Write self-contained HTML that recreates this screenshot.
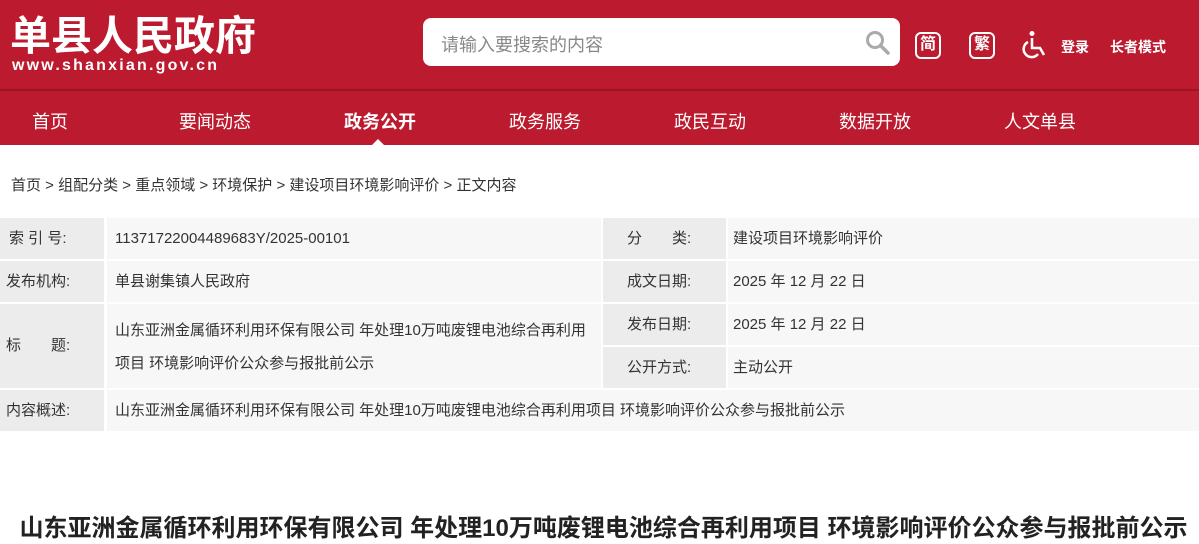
<!DOCTYPE html>
<html><head><meta charset="utf-8"><style>
*{margin:0;padding:0;box-sizing:border-box}
body{width:1199px;height:544px;overflow:hidden;background:#fff;font-family:"Liberation Sans","Noto Sans CJK SC",sans-serif;position:relative;color:#333}
.hd{position:absolute;left:0;top:0;width:1199px;height:145px;background:#bc1a2e}
.line{position:absolute;left:0;top:89px;width:1199px;height:2px;background:#9e1426}
.logo{position:absolute;left:10px;top:12px;color:#fff;font-size:41px;font-weight:bold;line-height:48px}
.url{position:absolute;left:12px;top:57px;color:#fff;font-size:16px;font-weight:bold;letter-spacing:2.2px}
.search{position:absolute;left:423px;top:18px;width:477px;height:48px;background:#fff;border-radius:8px}
.search span{position:absolute;left:18px;top:13px;font-size:18px;color:#888}
.ico{position:absolute;top:32px;width:26px;height:27px;border:2px solid #fff;border-radius:6px;color:#fff;font-size:16px;text-align:center;line-height:22px;font-weight:bold}
.tw{position:absolute;top:37px;color:#fff;font-size:14px;font-weight:bold}
.nav{position:absolute;top:108px;color:#fff;font-size:18px}
.bc{position:absolute;left:11px;top:174px;font-size:15px;color:#333}
.c{position:absolute;font-size:15px;color:#333;line-height:20px}
.g{background:#ececec}.l{background:#f7f7f7}
.title{position:absolute;left:0;width:1199px;top:508px;text-align:center;font-size:24px;font-weight:bold;color:#222;padding-left:8px}
</style></head><body>
<div class="hd"></div><div class="line"></div>
<div class="logo">单县人民政府</div>
<div class="url">www.shanxian.gov.cn</div>
<div class="search"><span>请输入要搜索的内容</span>
<svg style="position:absolute;left:442px;top:12px" width="26" height="26" viewBox="0 0 26 26"><circle cx="10" cy="10" r="7.5" fill="none" stroke="#aaa" stroke-width="3"/><line x1="15.5" y1="15.5" x2="23" y2="23" stroke="#aaa" stroke-width="3.5" stroke-linecap="round"/></svg></div>
<div class="ico" style="left:915px">简</div>
<div class="ico" style="left:969px">繁</div>
<svg style="position:absolute;left:1020px;top:30px" width="30" height="30" viewBox="0 0 30 30" fill="none" stroke="#fff" stroke-width="2.5"><circle cx="12" cy="3.5" r="2.5" fill="#fff" stroke="none"/><path d="M12 8v10h8l4 7"/><path d="M8 12a8 8 0 1 0 10 12"/></svg>
<div class="tw" style="left:1061px">登录</div>
<div class="tw" style="left:1110px">长者模式</div>
<div class="nav" style="left:32px">首页</div>
<div class="nav" style="left:179px">要闻动态</div>
<div class="nav" style="left:344px;font-weight:bold">政务公开</div>
<div class="nav" style="left:509px">政务服务</div>
<div class="nav" style="left:674px">政民互动</div>
<div class="nav" style="left:839px">数据开放</div>
<div class="nav" style="left:1004px">人文单县</div>
<div style="position:absolute;left:372px;top:139px;width:0;height:0;border-left:6px solid transparent;border-right:6px solid transparent;border-bottom:6px solid #fff"></div>
<div class="bc">首页 &gt; 组配分类 &gt; 重点领域 &gt; 环境保护 &gt; 建设项目环境影响评价 &gt; 正文内容</div>

<div class="c g" style="left:0;top:218px;width:104px;height:41px;padding:11px 0 0 9px">索 引 号:</div>
<div class="c l" style="left:107px;top:218px;width:494px;height:41px;padding:11px 0 0 8px">11371722004489683Y/2025-00101</div>
<div class="c g" style="left:603px;top:218px;width:123px;height:41px;padding:11px 0 0 24px">分　　类:</div>
<div class="c l" style="left:728px;top:218px;width:471px;height:41px;padding:11px 0 0 5px">建设项目环境影响评价</div>

<div class="c g" style="left:0;top:261px;width:104px;height:41px;padding:11px 0 0 6px">发布机构:</div>
<div class="c l" style="left:107px;top:261px;width:494px;height:41px;padding:11px 0 0 8px">单县谢集镇人民政府</div>
<div class="c g" style="left:603px;top:261px;width:123px;height:41px;padding:11px 0 0 24px">成文日期:</div>
<div class="c l" style="left:728px;top:261px;width:471px;height:41px;padding:11px 0 0 5px">2025 年 12 月 22 日</div>

<div class="c g" style="left:0;top:304px;width:104px;height:84px;padding:32px 0 0 6px">标　　题:</div>
<div class="c l" style="left:107px;top:304px;width:494px;height:84px;padding:10px 0 0 8px;line-height:33px">山东亚洲金属循环利用环保有限公司 年处理10万吨废锂电池综合再利用<br>项目 环境影响评价公众参与报批前公示</div>
<div class="c g" style="left:603px;top:304px;width:123px;height:41px;padding:11px 0 0 24px">发布日期:</div>
<div class="c l" style="left:728px;top:304px;width:471px;height:41px;padding:11px 0 0 5px">2025 年 12 月 22 日</div>
<div class="c g" style="left:603px;top:347px;width:123px;height:41px;padding:11px 0 0 24px">公开方式:</div>
<div class="c l" style="left:728px;top:347px;width:471px;height:41px;padding:11px 0 0 5px">主动公开</div>

<div class="c g" style="left:0;top:390px;width:104px;height:41px;padding:11px 0 0 6px">内容概述:</div>
<div class="c l" style="left:107px;top:390px;width:1092px;height:41px;padding:11px 0 0 8px">山东亚洲金属循环利用环保有限公司 年处理10万吨废锂电池综合再利用项目 环境影响评价公众参与报批前公示</div>

<div class="title">山东亚洲金属循环利用环保有限公司 年处理10万吨废锂电池综合再利用项目 环境影响评价公众参与报批前公示</div>
</body></html>
